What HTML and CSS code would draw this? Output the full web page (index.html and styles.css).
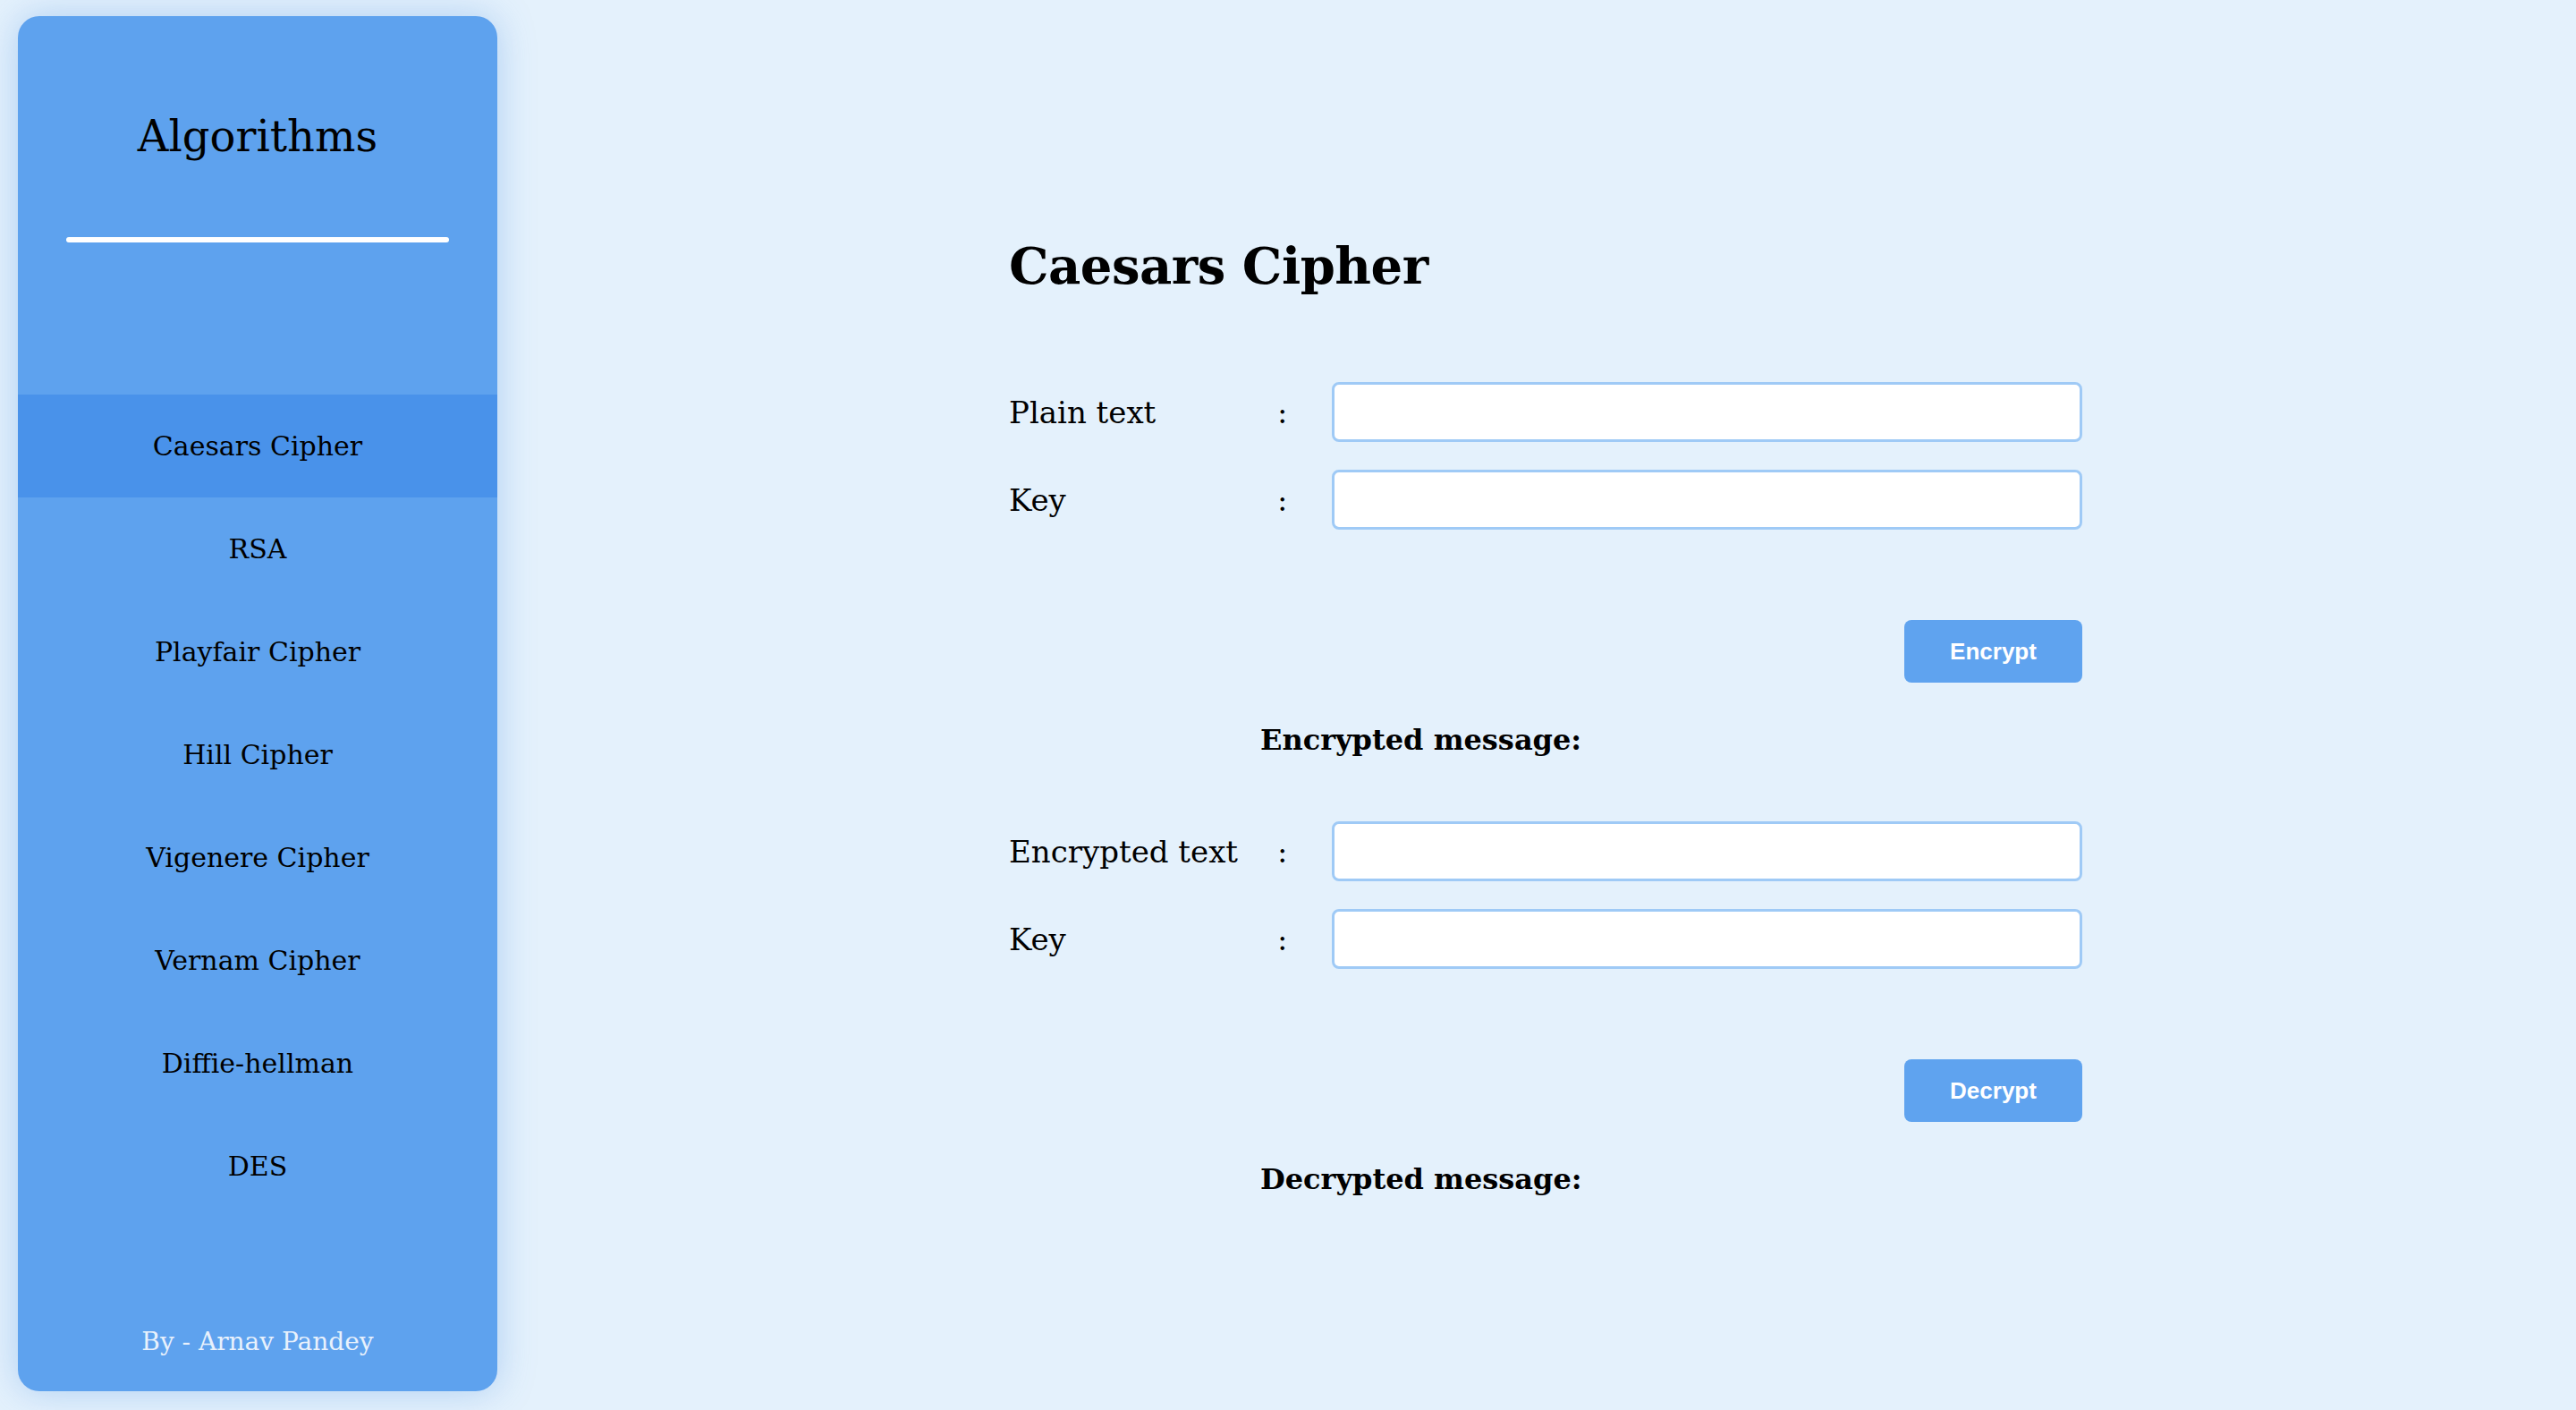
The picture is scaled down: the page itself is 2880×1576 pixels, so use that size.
FILE: index.html
```html
<!DOCTYPE html>
<html lang="en">
<head>
<meta charset="utf-8">
<title>Caesars Cipher</title>
<link rel="stylesheet" href="styles.css">
</head>
<body>
<div class="page">
  <aside class="sidebar">
    <h1 class="sidebar-title">Algorithms</h1>
    <div class="sidebar-rule"></div>
    <nav class="nav">
      <a class="nav-item active">Caesars Cipher</a>
      <a class="nav-item">RSA</a>
      <a class="nav-item">Playfair Cipher</a>
      <a class="nav-item">Hill Cipher</a>
      <a class="nav-item">Vigenere Cipher</a>
      <a class="nav-item">Vernam Cipher</a>
      <a class="nav-item">Diffie-hellman</a>
      <a class="nav-item">DES</a>
    </nav>
    <div class="sidebar-footer">By - Arnav Pandey</div>
  </aside>
  <main class="main">
    <div class="content">
      <h2 class="page-title">Caesars Cipher</h2>
      <div class="form-grid first">
        <label class="label">Plain text</label><span class="colon">:</span><input class="field" type="text">
        <label class="label">Key</label><span class="colon">:</span><input class="field" type="text">
      </div>
      <div class="actions"><button class="btn">Encrypt</button></div>
      <h3 class="result">Encrypted message:</h3>
      <div class="form-grid second">
        <label class="label">Encrypted text</label><span class="colon">:</span><input class="field" type="text">
        <label class="label">Key</label><span class="colon">:</span><input class="field" type="text">
      </div>
      <div class="actions"><button class="btn">Decrypt</button></div>
      <h3 class="result">Decrypted message:</h3>
    </div>
  </main>
</div>
</body>
</html>
```
FILE: styles.css
```css
* { box-sizing: border-box; }
html, body { margin: 0; padding: 0; }
body {
  background: #e4f1fc;
  font-family: "DejaVu Serif", "Liberation Serif", serif;
  color: #000;
}
.page {
  display: flex;
  height: 100vh;
  padding: 18px 0 21px 20px;
}
.sidebar {
  width: 536px;
  flex: none;
  background: #5ea2ee;
  border-radius: 24px;
  box-shadow: 0 0 40px rgba(74, 144, 226, 0.35);
  display: flex;
  flex-direction: column;
  align-items: stretch;
  padding-top: 104px;
}
.sidebar-title {
  margin: 0;
  font-size: 48px;
  font-weight: normal;
  line-height: 60px;
  text-align: center;
}
.sidebar-rule {
  width: 428px;
  height: 6px;
  background: #fff;
  border-radius: 3px;
  margin: 83px auto 0;
}
.nav {
  margin-top: 170px;
  display: flex;
  flex-direction: column;
}
.nav-item {
  height: 115px;
  display: flex;
  align-items: center;
  justify-content: center;
  font-size: 30px;
  color: #000;
  text-decoration: none;
}
.nav-item.active { background: #4992ea; }
.sidebar-footer {
  margin-top: auto;
  padding-bottom: 35px;
  line-height: 40px;
  text-align: center;
  font-size: 28px;
  color: #e8f1fc;
}
.main {
  flex: 1;
  display: flex;
  justify-content: center;
  padding-left: 20px;
}
.content {
  width: 1200px;
  padding-top: 239px;
}
.page-title {
  margin: 0;
  font-size: 56px;
  letter-spacing: -0.5px;
  font-weight: bold;
  line-height: 80px;
}
.form-grid {
  display: grid;
  grid-template-columns: 300px 61px 839px;
  row-gap: 31px;
  align-items: center;
}
.form-grid.first { margin-top: 90px; }
.form-grid.second { margin-top: 71px; }
.label { font-size: 34px; }
.colon { font-size: 34px; }
.field {
  height: 67px;
  border: 3px solid #9fcaf6;
  border-radius: 8px;
  background: #fff;
  outline: none;
  padding: 0 12px;
}
.actions {
  display: flex;
  justify-content: flex-end;
  margin-top: 101px;
}
.btn {
  width: 199px;
  height: 70px;
  border: none;
  border-radius: 8px;
  background: #5fa3ef;
  color: #fff;
  font-family: "Liberation Sans", Arial, sans-serif;
  font-weight: bold;
  font-size: 26px;
}
.result {
  margin: 44px 0 0 281px;
  font-size: 32px;
  font-weight: bold;
  line-height: 40px;
}
```
